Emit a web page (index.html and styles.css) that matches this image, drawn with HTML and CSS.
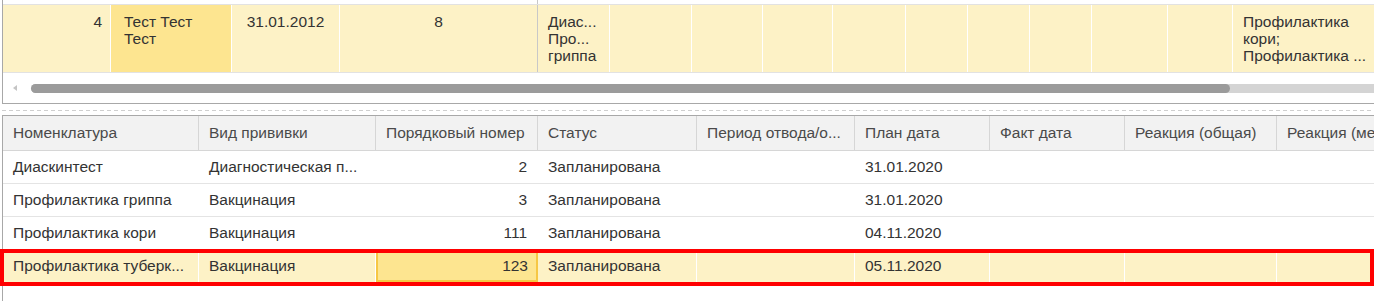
FILE: index.html
```html
<!DOCTYPE html>
<html lang="ru">
<head>
    <meta charset="UTF-8">
    <title>Прививки</title>
    <link rel="stylesheet" href="styles.css">
</head>
<body>
    <div class="page">
        <!-- Верхний список -->
        <div class="top-frame">
            <div class="top-grid prev-row">
                <div></div><div></div><div></div><div class="fixed-edge"></div>
            </div>
            <div class="top-grid top-row">
                <div class="cell right">4</div>
                <div class="cell name current">Тест Тест<br>Тест</div>
                <div class="cell center">31.01.2012</div>
                <div class="cell center fixed-edge">8</div>
                <div class="cell">Диас...<br>Про...<br>гриппа</div>
                <div class="cell"></div>
                <div class="cell"></div>
                <div class="cell"></div>
                <div class="cell"></div>
                <div class="cell"></div>
                <div class="cell"></div>
                <div class="cell"></div>
                <div class="cell"></div>
                <div class="cell"></div>
                <div class="cell">Профилактика<br>кори;<br>Профилактика ...</div>
            </div>
            <div class="hscroll">
                <span class="arrow-left"></span>
                <div class="track"><div class="thumb"></div></div>
            </div>
        </div>

        <div class="splitter"></div>

        <!-- Нижняя таблица -->
        <div class="bottom-frame">
            <div class="grid head">
                <div class="hcell">Номенклатура</div>
                <div class="hcell">Вид прививки</div>
                <div class="hcell">Порядковый номер</div>
                <div class="hcell">Статус</div>
                <div class="hcell">Период отвода/о...</div>
                <div class="hcell">План дата</div>
                <div class="hcell">Факт дата</div>
                <div class="hcell">Реакция (общая)</div>
                <div class="hcell">Реакция (местная)</div>
            </div>
            <div class="grid line">
                <div class="cell">Диаскинтест</div>
                <div class="cell">Диагностическая п...</div>
                <div class="cell right">2</div>
                <div class="cell">Запланирована</div>
                <div class="cell"></div>
                <div class="cell">31.01.2020</div>
                <div class="cell"></div>
                <div class="cell"></div>
                <div class="cell"></div>
            </div>
            <div class="grid line">
                <div class="cell">Профилактика гриппа</div>
                <div class="cell">Вакцинация</div>
                <div class="cell right">3</div>
                <div class="cell">Запланирована</div>
                <div class="cell"></div>
                <div class="cell">31.01.2020</div>
                <div class="cell"></div>
                <div class="cell"></div>
                <div class="cell"></div>
            </div>
            <div class="grid line">
                <div class="cell">Профилактика кори</div>
                <div class="cell">Вакцинация</div>
                <div class="cell right">111</div>
                <div class="cell">Запланирована</div>
                <div class="cell"></div>
                <div class="cell">04.11.2020</div>
                <div class="cell"></div>
                <div class="cell"></div>
                <div class="cell"></div>
            </div>
            <div class="grid line selected">
                <div class="cell">Профилактика туберк...</div>
                <div class="cell">Вакцинация</div>
                <div class="cell right current">123</div>
                <div class="cell">Запланирована</div>
                <div class="cell"></div>
                <div class="cell">05.11.2020</div>
                <div class="cell"></div>
                <div class="cell"></div>
                <div class="cell"></div>
            </div>
        </div>
    </div>

    <div class="mark"></div>
</body>
</html>
```

FILE: styles.css
```css
body {
    margin: 0;
    font-family: "Liberation Sans", Arial, sans-serif;
    font-size: 15.5px;
    color: #333;
    background-color: #fff;
    overflow: hidden;
    height: 301px;
    position: relative;
}

.page {
    padding-left: 2px;
    display: flex;
    flex-direction: column;
    height: 100%;
}

/* верхний список */
.top-frame {
    height: 104px;
    box-sizing: border-box;
    border-left: 1px solid #a8a8a8;
    border-bottom: 1px solid #a8a8a8;
    overflow: hidden;
}

.top-grid {
    display: grid;
    grid-template-columns: 108px 121px 108px 198px 72px 82px 71px 70px 73px 62px 62px 62px 76px 65px 300px;
}

.prev-row {
    height: 5px;
    box-sizing: border-box;
    border-bottom: 1px solid #e2e2e2;
}

.prev-row .fixed-edge {
    border-right: 1px solid #c8c8c8;
}

.top-row {
    height: 68px;
    box-sizing: border-box;
    border-bottom: 1px solid #e2e2e2;
    background-color: #fdf2c6;
    line-height: 17px;
}

.top-row .cell {
    padding: 8px 10px 0;
    border-right: 1px solid #fff;
    white-space: nowrap;
    overflow: hidden;
}

.top-row .cell.right {
    padding-right: 8px;
}

.top-row .cell.name {
    padding-left: 13px;
}

.top-row .cell.current {
    background-color: #fde590;
}

.top-row .cell.fixed-edge {
    border-right: 1px solid #c8c8c8;
}

.hscroll {
    height: 30px;
    display: flex;
    align-items: center;
    padding-left: 10px;
}

.arrow-left {
    width: 0;
    height: 0;
    border-top: 3px solid transparent;
    border-bottom: 3px solid transparent;
    border-right: 4px solid #c4c4c4;
}

.track {
    flex: 1;
    margin-left: 14px;
    height: 9px;
    border-radius: 5px 0 0 5px;
    background-color: #d4d4d4;
}

.thumb {
    width: 1199px;
    height: 100%;
    border-radius: 5px;
    background-color: #9b9b9b;
}

.splitter {
    height: 1px;
    margin: 6px 0 4px;
    background: repeating-linear-gradient(to right, #cfcfcf 0 4px, transparent 4px 7px);
}

/* нижняя таблица */
.bottom-frame {
    flex: 1;
    border-top: 1px solid #a8a8a8;
    border-left: 1px solid #a8a8a8;
    overflow: hidden;
}

.grid {
    display: grid;
    grid-template-columns: 196px 177px 162px 159px 158px 135px 135px 152px 200px;
}

.head {
    height: 35px;
    box-sizing: border-box;
    background-color: #f2f2f2;
    border-bottom: 1px solid #d6d6d6;
    color: #4a4a4a;
}

.hcell {
    display: flex;
    align-items: center;
    padding: 0 10px;
    border-right: 1px solid #d6d6d6;
    white-space: nowrap;
    overflow: hidden;
}

.line {
    height: 33px;
    box-sizing: border-box;
    border-bottom: 1px solid #e4e4e4;
}

.line .cell {
    display: flex;
    align-items: center;
    padding: 0 10px;
    border-right: 1px solid transparent;
    white-space: nowrap;
    overflow: hidden;
}

.cell.right {
    justify-content: flex-end;
    text-align: right;
}

.cell.center {
    text-align: center;
}

.line.selected {
    background-color: #fdf2c6;
}

.line.selected .cell {
    border-right-color: #fff;
}

.line.selected .cell.current {
    background-color: #fde590;
    border: 2px solid #f6c744;
    padding-right: 8px;
}

/* выделение строки рамкой */
.mark {
    position: absolute;
    left: 0;
    top: 249px;
    width: 1374px;
    height: 37px;
    box-sizing: border-box;
    border: 4px solid #ff0000;
}
```
